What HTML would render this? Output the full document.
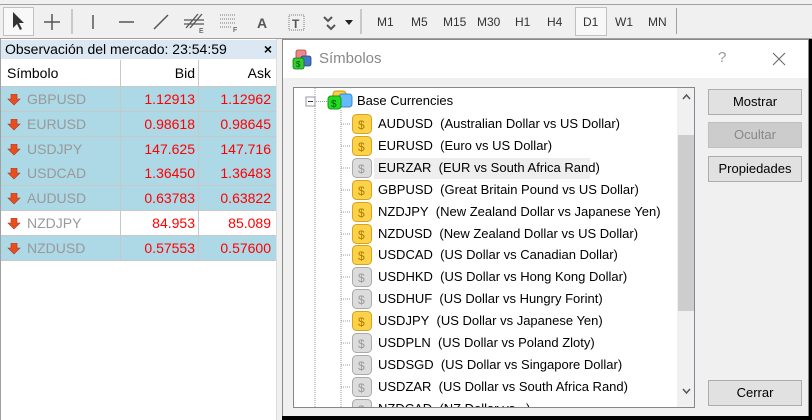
<!DOCTYPE html>
<html><head><meta charset="utf-8">
<style>
*{box-sizing:border-box;margin:0;padding:0}
body{width:812px;height:420px;overflow:hidden;background:#f0f0f0;font-family:"Liberation Sans",sans-serif;font-size:13px;position:relative;color:#000}
.abs{position:absolute}
.tb{left:0;top:0;width:812px;height:39px;background:#f0f0f0;border-bottom:1px solid #a0a0a0}
.tf{position:absolute;top:15px;font-size:12px;color:#333}
.sep{position:absolute;top:8px;width:1px;height:26px;background:#a0a0a0}
.lp{left:0;top:39px;width:276px;height:381px;background:#fff;border-left:1px solid #a0a0a0}
.hdr{left:1px;top:40px;width:275px;height:19px;background:#dbe8f3;font-size:14px;line-height:19px;padding-left:4px}
.row{position:absolute;left:1px;width:275px;height:24px;font-size:14px;line-height:24px}
.row.b{background:#add8e6}
.row span{position:absolute}
.row .s{left:26px;color:#999}
.row .bid{right:81px;color:#f00}
.row .ask{right:5px;color:#f00}
.row i{position:absolute;left:119px;top:0;width:1px;height:24px;background:#c8c8c8}
.row u{position:absolute;left:197px;top:0;width:1px;height:24px;background:#c8c8c8}
.row em{position:absolute;left:0;bottom:0;width:275px;height:1px;background:#c8c8c8}
.dlg{left:282px;top:39px;width:527px;height:378px;background:#f0f0f0;border:1px solid #8a8a8a}
.tree{left:293px;top:87px;width:402px;height:321px;background:#fff;border:1px solid #828790;overflow:hidden}
.it{position:absolute;left:84px;height:20px;line-height:20px;font-size:13px;white-space:nowrap}
.btn{position:absolute;left:708px;width:94px;height:26px;background:#e1e1e1;border:1px solid #adadad;text-align:center;line-height:24px;font-size:13px}
</style></head><body>
<div class="abs tb">
 <div class="abs" style="left:0;top:4px;width:812px;height:1px;background:#a0a0a0"></div>
 <div class="abs" style="left:3px;top:7px;width:31px;height:29px;border:1px solid #c0c0c0;background:#f8f8f8"></div>
 <svg class="abs" style="left:0;top:0" width="370" height="39">
  <path d="M13 12 L13 28 L17 24 L20 30 L22 29 L19 23 L24 23 Z" fill="#333"/>
  <path d="M52 14 V30 M44 22 H60" stroke="#555" stroke-width="1.5"/>
  <line x1="72" y1="9" x2="72" y2="34" stroke="#a0a0a0"/>
  <line x1="93" y1="15" x2="93" y2="29" stroke="#555" stroke-width="1.5"/>
  <line x1="119" y1="22" x2="134" y2="22" stroke="#555" stroke-width="1.5"/>
  <line x1="154" y1="29" x2="168" y2="15" stroke="#555" stroke-width="1.5"/>
  <path d="M186 28 L198 14 M190 28 L202 14 M184 20 H204 M184 24 H204" stroke="#555" stroke-width="1.3"/>
  <text x="199" y="33" font-size="7" fill="#333" font-family="Liberation Sans">E</text>
  <path d="M220 15 H236 M220 19 H236 M220 23 H236 M220 27 H232" stroke="#777" stroke-dasharray="1 1"/>
  <text x="233" y="32" font-size="7" fill="#333" font-family="Liberation Sans">F</text>
  <text x="257" y="28" font-size="14" font-weight="bold" fill="#555" font-family="Liberation Sans">A</text>
  <rect x="289" y="15" width="15" height="15" fill="none" stroke="#777" stroke-dasharray="1 1"/>
  <text x="292" y="28" font-size="12" font-weight="bold" fill="#555" font-family="Liberation Sans">T</text>
  <path d="M324 17 L328 21 L332 17 M327 25 L331 29 L335 25" stroke="#555" stroke-width="2" fill="none"/>
  <path d="M345 20 H353 L349 25 Z" fill="#222"/>
  <line x1="361" y1="9" x2="361" y2="34" stroke="#a0a0a0"/>
 </svg>
 <div class="tf" style="left:377px">M1</div>
 <div class="tf" style="left:411px">M5</div>
 <div class="tf" style="left:443px">M15</div>
 <div class="tf" style="left:477px">M30</div>
 <div class="tf" style="left:515px">H1</div>
 <div class="tf" style="left:547px">H4</div>
 <div class="abs" style="left:575px;top:7px;width:32px;height:29px;border:1px solid #c0c0c0;background:#f8f8f8"></div>
 <div class="tf" style="left:583px">D1</div>
 <div class="tf" style="left:615px">W1</div>
 <div class="tf" style="left:648px">MN</div>
 <div class="sep" style="left:676px"></div>
</div>
<div class="abs lp"></div>
<div class="abs hdr">Observación del mercado: 23:54:59<span style="position:absolute;right:4px;font-weight:bold">×</span></div>
<div class="row" style="top:60px;height:27px;line-height:27px"><span style="left:6px">Símbolo</span><span style="right:81px">Bid</span><span style="right:5px">Ask</span><i style="height:27px"></i><u style="height:27px"></u><em></em></div>
<div id="rows"></div>
<div class="abs" style="left:276px;top:39px;width:6px;height:381px;background:#f0f0f0;border-left:1px solid #ddd"></div>
<div class="abs dlg">
 <div class="abs" style="left:0;top:0;width:525px;height:38px;background:#fff"></div>
 <svg class="abs" style="left:9px;top:9px" width="22" height="22">
  <rect x="4" y="1" width="10" height="9" rx="2" fill="#e88" stroke="#a44" stroke-width=".8"/>
  <rect x="9" y="7" width="10" height="10" rx="2" fill="#47c" stroke="#247" stroke-width=".8"/>
  <rect x="1" y="9" width="11" height="11" rx="2" fill="#3c3" stroke="#171" stroke-width=".8"/>
  <text x="4" y="18" font-size="8" fill="#050" font-family="Liberation Sans">$</text>
 </svg>
 <div class="abs" style="left:36px;top:10px;font-size:15px;color:#888">Símbolos</div>
 <div class="abs" style="left:435px;top:9px;font-size:15px;color:#999">?</div>
 <svg class="abs" style="left:489px;top:12px" width="14" height="14"><path d="M1 1 L13 13 M13 1 L1 13" stroke="#666" stroke-width="1"/></svg>
</div>
<div class="abs tree" id="tree">
 <svg class="abs" style="left:0;top:0" width="400" height="320">
  <line x1="21" y1="0" x2="21" y2="320" stroke="#999" stroke-dasharray="1 1"/>
  <line x1="47" y1="22" x2="47" y2="320" stroke="#999" stroke-dasharray="1 1"/>
  <rect x="12" y="9" width="9" height="9" fill="#fff" stroke="#999"/>
  <line x1="14" y1="13.5" x2="19" y2="13.5" stroke="#336"/>
  <line x1="22" y1="13.5" x2="33" y2="13.5" stroke="#999" stroke-dasharray="1 1"/>
  <rect x="39" y="3" width="13" height="12" rx="3" fill="#fc4" stroke="#c90"/>
  <rect x="45" y="6" width="13" height="13" rx="3" fill="#6bf" stroke="#38c"/>
  <rect x="34" y="8" width="13" height="13" rx="3" fill="#2d2" stroke="#191"/>
  <text x="37" y="19" font-size="10" fill="#050" font-family="Liberation Sans">$</text>
 </svg>
 <div class="it" style="left:63px;top:3px">Base Currencies</div>
 <div class="abs" style="left:383px;top:0;width:17px;height:319px;background:#f0f0f0"></div>
 <div class="abs" style="left:384px;top:47px;width:16px;height:176px;background:#cdcdcd"></div>
 <svg class="abs" style="left:384px;top:0" width="17" height="320"><path d="M5 11 L8.5 7 L12 11" stroke="#555" stroke-width="1.5" fill="none"/><path d="M5 301 L8.5 305 L12 301" stroke="#555" stroke-width="1.5" fill="none"/></svg>
</div>
<div class="btn" style="top:89px">Mostrar</div>
<div class="btn" style="top:122px;background:#cccccc;border-color:#bfbfbf;color:#888">Ocultar</div>
<div class="btn" style="top:156px">Propiedades</div>
<div class="btn" style="top:380px">Cerrar</div>
<div class="abs" style="left:809px;top:39px;width:3px;height:381px;background:#000"></div>
<div class="abs" style="left:282px;top:416px;width:530px;height:4px;background:#000"></div>
<script>
var R=[["GBPUSD","1.12913","1.12962",1],["EURUSD","0.98618","0.98645",1],["USDJPY","147.625","147.716",1],["USDCAD","1.36450","1.36483",1],["AUDUSD","0.63783","0.63822",1],["NZDJPY","84.953","85.089",0],["NZDUSD","0.57553","0.57600",1]];
var h="";R.forEach(function(r,i){var t=87+i*24.8;
h+='<div class="row'+(r[3]?' b':'')+'" style="top:'+t+'px;height:25px"><svg style="position:absolute;left:6px;top:7px" width="14" height="12"><path d="M4 0 H10 V5 H13 L7 11 L1 5 H4 Z" fill="#e8501a" stroke="#a33" stroke-width=".6"/></svg><span class="s">'+r[0]+'</span><span class="bid">'+r[1]+'</span><span class="ask">'+r[2]+'</span><i style="height:25px"></i><u style="height:25px"></u><em></em></div>';});
document.getElementById("rows").innerHTML=h;
var T=[["AUDUSD","Australian Dollar vs US Dollar",1],["EURUSD","Euro vs US Dollar",1],["EURZAR","EUR vs South Africa Rand",0],["GBPUSD","Great Britain Pound vs US Dollar",1],["NZDJPY","New Zealand Dollar vs Japanese Yen",1],["NZDUSD","New Zealand Dollar vs US Dollar",1],["USDCAD","US Dollar vs Canadian Dollar",1],["USDHKD","US Dollar vs Hong Kong Dollar",0],["USDHUF","US Dollar vs Hungry Forint",0],["USDJPY","US Dollar vs Japanese Yen",1],["USDPLN","US Dollar vs Poland Zloty",0],["USDSGD","US Dollar vs Singapore Dollar",0],["USDZAR","US Dollar vs South Africa Rand",0],["NZDCAD","NZ Dollar vs...",0]];
var g="";T.forEach(function(r,i){var c=36+i*21.9;
if(i==2)g+='<div class="abs" style="left:80px;top:'+(c-10)+'px;width:216px;height:21px;background:#eee"></div>';
var f=r[2]?"#fbd24a":"#dcdcdc",s=r[2]?"#d9a21a":"#aaa",tc=r[2]?"#b07a00":"#999";
g+='<svg class="abs" style="left:47px;top:'+(c-11)+'px" width="32" height="22"><line x1="0" y1="11" x2="10" y2="11" stroke="#999" stroke-dasharray="1 1"/><rect x="11.5" y="1.5" width="19" height="19" rx="4" fill="'+f+'" stroke="'+s+'"/><text x="17" y="16" font-size="12" fill="'+tc+'" font-family="Liberation Sans">$</text></svg>';
g+='<div class="it" style="top:'+(c-10)+'px">'+r[0]+'&nbsp; ('+r[1]+')</div>';});
document.getElementById("tree").insertAdjacentHTML("afterbegin",g);
</script>
</body></html>
